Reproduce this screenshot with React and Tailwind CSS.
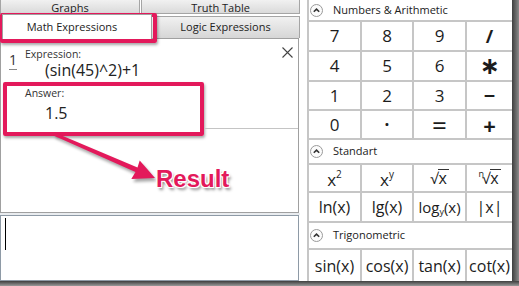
import React from 'react';

const FONT = "font-['Open_Sans','Noto_Sans',sans-serif]";

function CircleChevron() {
  return (
    <svg width="13" height="13" viewBox="0 0 13 13" className="shrink-0">
      <circle cx="6.5" cy="6.5" r="6" fill="#fbfbfb" stroke="#9a9a9a" />
      <path d="M3.8 7.8 L6.5 5.1 L9.2 7.8" fill="none" stroke="#333" strokeWidth="1.6" />
    </svg>
  );
}

function Header({ title, className }) {
  return (
    <div className={`flex items-center gap-[10px] pl-[1px] bg-white ${className}`}>
      <CircleChevron />
      <span className="text-[11px] text-[#222]">{title}</span>
    </div>
  );
}

function Keys({ items, className }) {
  return (
    <div className={`grid grid-cols-[51px_50px_51px_45px] gap-[2px] py-[2px] bg-[#c6c6c6] ${className}`}>
      {items.map((it, i) => (
        <div key={i} className="bg-white flex items-center justify-center text-[#1c1c1c]">
          {it}
        </div>
      ))}
    </div>
  );
}

const num = (t) => <span className="text-[17px] leading-[22px]">{t}</span>;
const fn = (t) => <span className="text-[16px] leading-[22px]">{t}</span>;

const numberKeys = [
  num('7'), num('8'), num('9'), <span className="text-[18px] leading-[22px] font-bold">/</span>,
  num('4'), num('5'), num('6'), <span className="text-[24px] leading-[22px] font-bold font-['DejaVu_Sans',sans-serif]">∗</span>,
  num('1'), num('2'), num('3'), <span className="text-[20px] leading-[22px] font-bold">−</span>,
  num('0'), <span className="text-[17px] leading-[22px] font-bold">·</span>, <span className="text-[26px] leading-[22px]">=</span>, <span className="text-[22px] leading-[22px] font-bold">+</span>,
];

const standardKeys = [
  <span className="text-[17px] leading-[22px] pt-[3px]">x<sup className="text-[10px] relative -top-[8px]">2</sup></span>,
  <span className="text-[17px] leading-[22px] pt-[3px]">x<sup className="text-[10px] relative -top-[8px]">y</sup></span>,
  <span className="text-[15px] leading-[18px] flex items-start">√<span className="border-t border-[#333] leading-[16px] text-[16px] pr-[2px]">x</span></span>,
  <span className="text-[15px] leading-[18px] flex items-start"><span className="text-[9px] leading-[10px] mr-[-2px]">n</span>√<span className="border-t border-[#333] leading-[16px] text-[16px] pr-[2px]">x</span></span>,
  fn('ln(x)'),
  fn('lg(x)'),
  <span className="text-[15px] leading-[22px]">log<sub className="text-[9px]">y</sub>(x)</span>,
  fn('|x|'),
];

const trigKeys = [fn('sin(x)'), fn('cos(x)'), fn('tan(x)'), fn('cot(x)')];

function Arrow() {
  return (
    <svg width="130" height="75" viewBox="0 0 130 75" className="absolute left-[45px] top-[125px] pointer-events-none">
      <defs>
        <filter id="sh" x="-20%" y="-20%" width="140%" height="140%">
          <feGaussianBlur stdDeviation="1.5" />
        </filter>
      </defs>
      <g transform="translate(2 3)" fill="#000" opacity="0.35" filter="url(#sh)">
        <polygon points="9.6,7.6 92.5,42.5 94.7,35.5 110,53 86.3,54.1 90.5,47.1 8.4,10.4" />
      </g>
      <polygon fill="#e3195b" points="9.6,7.6 92.5,42.5 94.7,35.5 110,53 86.3,54.1 90.5,47.1 8.4,10.4" />
    </svg>
  );
}

function CloseX() {
  return (
    <svg width="11" height="11" viewBox="0 0 11 11" className="absolute right-[5px] top-[8px]">
      <path d="M0.5 0.5 L10.5 10.5 M10.5 0.5 L0.5 10.5" stroke="#444" strokeWidth="1.1" />
    </svg>
  );
}

export default function App() {
  return (
    <div className={`w-[519px] h-[286px] relative overflow-hidden bg-white ${FONT}`}>
      <div className="flex h-[281px]">
        {/* left: expressions */}
        <div className="w-[300px] flex flex-col">
          <div className="h-[14px] flex">
            <div className="w-[140px] border-x border-b border-[#a5a5a5] bg-linear-to-b from-[#f1f1f1] to-[#dadada] text-[11px] leading-[14px] pt-[1px] text-center text-[#222] overflow-hidden">
              Graphs
            </div>
            <div className="flex-1 ml-[1px] border-x border-b border-[#a5a5a5] bg-linear-to-b from-[#f1f1f1] to-[#dadada] text-[11px] leading-[14px] pt-[1px] text-center text-[#222] overflow-hidden">
              Truth Table
            </div>
          </div>
          <div className="h-[24px] flex">
            <div className="w-[150px] ml-[2px] pr-[10px] bg-white border-x border-t border-[#a0a0a0] flex items-center justify-center text-[11px] text-[#222] relative z-10 -mb-[1px]">
              Math Expressions
            </div>
            <div className="flex-1 mt-[2px] h-[22px] bg-linear-to-b from-[#f1f1f1] to-[#d6d6d6] border-t border-r border-[#a5a5a5] flex items-center justify-center text-[11px] text-[#222]">
              Logic Expressions
            </div>
          </div>
          <div className="flex-1 mr-[1px] border border-[#a0a0a0] bg-white relative flex flex-col">
            <CloseX />
            <div className="flex pt-[8px]">
              <div className="w-[24px] pl-[8px]">
                <span className="text-[14px] leading-[16px] text-[#333] border-b border-[#888]">1</span>
              </div>
              <div className="flex flex-col">
                <div className="text-[10.5px] leading-[14px] text-[#333]">Expression:</div>
                <div className="text-[16px] leading-[20px] -mt-[1px] pl-[20px] text-[#222]">(sin(45)^2)+1</div>
              </div>
            </div>
            <div className="flex items-start mt-[2px]">
              <div className="w-[201px] h-[54px] ml-[2px] border-[4px] border-[#e3195b] rounded-[2px] shadow-[1px_2px_3px_rgba(0,0,0,0.35)] flex flex-col">
                <div className="text-[10.5px] leading-[14px] pl-[18px] text-[#333]">Answer:</div>
                <div className="text-[16px] leading-[20px] mt-[3px] pl-[38px] text-[#222]">1.5</div>
              </div>
              <div className="flex-1 h-[47px] border-b border-[#c4c4c4]" />
            </div>
          </div>
          <div className="h-[2px] bg-[#e9ecef]" />
          <div className="h-[66px] mr-[1px] border border-[#8e9aa6] bg-white pl-[4px] pt-[2px]">
            <div className="w-[1px] h-[32px] bg-black" />
          </div>
        </div>

        <div className="w-[7px] bg-white" />

        {/* right: keypad */}
        <div className="w-[205px] flex flex-col border-l-2 border-[#c6c6c6] bg-white">
          <Header title="Numbers & Arithmetic" className="h-[20px]" />
          <Keys items={numberKeys} className="grid-rows-[28px_28px_27px_27px]" />
          <Header title="Standart" className="h-[23px]" />
          <Keys items={standardKeys} className="grid-rows-[26px_28px]" />
          <Header title="Trigonometric" className="h-[25px]" />
          <Keys items={trigKeys} className="flex-1 grid-rows-[31px] pb-0" />
        </div>

        <div className="w-[7px] bg-linear-to-r from-[#3f3f3f] to-[#8c8c8c]" />
      </div>
      <div className="h-[5px] bg-linear-to-b from-[#3f3f3f] to-[#9a9a9a]" />

      {/* annotations */}
      <div className="absolute left-0 top-[13px] w-[157px] h-[30px] border-[4px] border-[#e3195b] rounded-[2px] shadow-[1px_2px_3px_rgba(0,0,0,0.35)] pointer-events-none" />
      <Arrow />
      <div className="absolute left-[156px] top-[167px] text-[24px] leading-[24px] font-bold font-['Liberation_Sans',sans-serif] text-[#e3195b] [text-shadow:-1px_-1px_0_#fff,1px_-1px_0_#fff,-1px_1px_0_#fff,1px_1px_0_#fff,2px_3px_3px_rgba(0,0,0,0.45)]">
        Result
      </div>
    </div>
  );
}
